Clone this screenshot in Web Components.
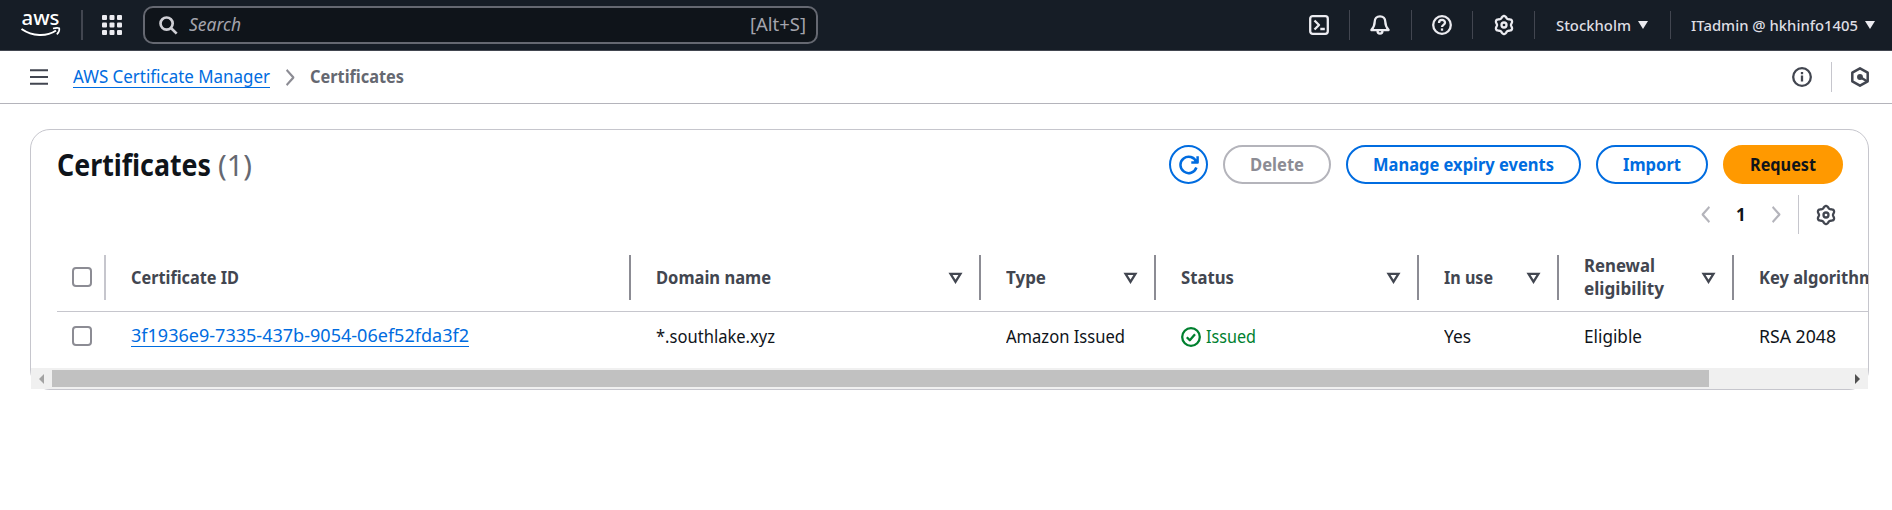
<!DOCTYPE html>
<html lang="en">
<head>
<meta charset="utf-8">
<title>Certificates | AWS Certificate Manager</title>
<style>
html,body{margin:0;padding:0;background:#fff}
body{font:17.5px/23px "Noto Sans","Open Sans",sans-serif;color:#0f141a;width:1892px;height:510px;overflow:hidden}
</style>
</head>
<body>
<acm-app></acm-app>
<script>
const define = (name, html, init) => customElements.define(name, class extends HTMLElement {
  connectedCallback() {
    if (this.shadowRoot) return;
    const t = document.createElement('template');
    t.innerHTML = typeof html === 'function' ? html(this) : html;
    this.attachShadow({mode: 'open'}).append(t.content.cloneNode(true));
    if (init) init(this);
  }
});

/* Text that fills a given width */
define('fit-text', '<style>:host{display:inline-block;white-space:nowrap;flex:none}span{display:inline-block;transform-origin:0 50%}</style><span><slot></slot></span>', el => {
  const s = el.shadowRoot.querySelector('span'), w = +el.getAttribute('w');
  s.style.transform = `scaleX(${w / s.getBoundingClientRect().width})`;
  el.style.width = w + 'px';
});

/* Six-lobed cog outline */
let cog = '';
for (let i = 0; i < 72; i++) {
  const a = i * Math.PI / 36, r = 8 - 1.05 * Math.cos(6 * a);
  cog += (i ? 'L' : 'M') + (10 + r * Math.cos(a)).toFixed(2) + ' ' + (10 + r * Math.sin(a)).toFixed(2);
}
cog += 'Z';
const icons = {
  terminal: '<rect x="1.2" y="1.2" width="17.6" height="17.6" rx="2.5"/><path d="M5.5 5.5 10 10l-4.500 4.500M11.300 14h4.500"/>',
  bell: '<path d="M10 1.300c-3.200 0-5.300 2.300-5.300 5.500 0 4.200-1.400 6-3.300 8.300h17.200c-1.900-2.300-3.300-4.100-3.300-8.300 0-3.200-2.100-5.500-5.300-5.500ZM7.500 15.500c0 4.200 5 4.200 5 0"/>',
  help: '<circle cx="10" cy="10" r="8.800"/><path d="M7 8c0-4 6-4 6-.3 0 2.200-3 2.100-3 4.300"/><path d="M10 13.400v2.300"/>',
  cog: `<path d="${cog}"/><circle cx="10" cy="10" r="2.500"/>`,
  info: '<circle cx="10" cy="10" r="8.800"/><path d="M10 8.500v6M10 5v2.200"/>',
  hex: '<path d="M10 1.300 17.700 5.700v8.600L10 18.700l-7.700-4.400V5.700Z"/><circle cx="10" cy="10" r="1.700" fill="currentColor"/><path d="M10 10l7 4.200"/>',
  check: '<circle cx="10" cy="10" r="8.800"/><path d="m5.800 10.200 3 3 5.200-6"/>',
  refresh: '<path d="M17.400 12.500A8.200 8.200 0 1 1 17.300 7M18.600 1.200v6.300h-6.300"/>',
  search: '<circle cx="8" cy="8" r="6.400"/><path d="m12.600 12.600 6 6"/>',
  menu: '<path d="M0 2.500h20M0 10h20M0 17.500h20"/>',
  right: '<path d="m4 1 10.500 9L4 19"/>',
  prev: '<path d="M16 1 5.500 10 16 19"/>',
  filter: '<path d="M2.300 3h15.400L10 16.500Z" stroke-linejoin="miter"/>',
  caret: '<path d="M0 0h20L10 20Z" fill="currentColor" stroke="none"/>',
  grid: [1,2,3].map(i=>[1,2,3].map(j=>`<rect x="${(i-1)*7.5}" y="${(j-1)*7.5}" width="5" height="5" rx="1" fill="currentColor" stroke="none"/>`).join('')).join('')
};
define('ui-icon', el => {
  const s = el.getAttribute('s') || 20, h = el.getAttribute('h') || s;
  return `<style>:host{display:block;flex:none;width:${s}px;height:${h}px}svg{display:block;overflow:visible}</style>
  <svg width="${s}" height="${h}" viewBox="0 0 20 20" preserveAspectRatio="none" fill="none" stroke="currentColor" stroke-width="${el.getAttribute('sw') || 2.3}" stroke-linejoin="round">${icons[el.getAttribute('name')]}</svg>`;
});

define('aws-logo', `<style>:host{display:block;width:40px;height:26px;flex:none}svg{display:block;overflow:visible}text{font:500 20px "Noto Sans",sans-serif;fill:#fff}</style>
<svg width="40" height="26" viewBox="0 0 40 26"><text x="0.500" y="12.500" textLength="38" lengthAdjust="spacingAndGlyphs">aws</text>
<path d="M.5 17c11 7.500 25 8 34.500 1.500" fill="none" stroke="#fff" stroke-width="2.100"/><path d="M32 16.600c2.500-.7 5-.9 6.300-.3.300 1.800-.6 4.300-2.500 6" fill="none" stroke="#fff" stroke-width="1.600"/></svg>`);

define('ui-rule', el => `<style>:host{display:block;flex:none;width:${el.getAttribute('w') || 1}px;height:${el.getAttribute('h') || 30}px;background:${el.getAttribute('c') || '#424650'}}</style>`);

define('top-nav', `<style>
:host{display:flex;box-sizing:border-box;height:51px;align-items:center;background:#161d26;border-bottom:1px solid #424650;color:#ebebf0;padding-left:21px}
.search{box-sizing:border-box;display:flex;align-items:center;width:675px;height:38px;margin-left:21px;padding:0 10px 0 14px;border:2px solid #656871;border-radius:10px;background:#0f141a;color:#a4a4ad}
.search ui-icon{color:#d0d0d6;margin-right:11px}
.search i{flex:1;margin-top:-1px}.key{margin-top:-1px}
.right{display:flex;align-items:center;margin-left:auto;padding-right:17px}
.n{font-size:15px;font-weight:500;line-height:20px;color:#dedee3}
</style>
<aws-logo></aws-logo><ui-rule w="2" style="margin:0 19px 0 20px"></ui-rule><ui-icon name="grid"></ui-icon>
<div class="search"><ui-icon name="search" s="19" sw="2.8"></ui-icon><i><fit-text w="52">Search</fit-text></i><fit-text class="key" w="56">[Alt+S]</fit-text></div>
<div class="right">
<ui-icon name="terminal"></ui-icon><ui-rule style="margin:0 20px"></ui-rule>
<ui-icon name="bell"></ui-icon><ui-rule style="margin:0 20px 0 21px"></ui-rule>
<ui-icon name="help"></ui-icon><ui-rule h="28" style="margin:0 21px 0 20px"></ui-rule>
<ui-icon name="cog"></ui-icon><ui-rule h="28" style="margin:0 21px 0 20px"></ui-rule>
<fit-text class="n" w="75">Stockholm</fit-text><ui-icon name="caret" s="10" h="8" style="margin-left:7px"></ui-icon>
<ui-rule h="28" style="margin:0 20px 0 22px"></ui-rule>
<fit-text class="n" w="167">ITadmin @ hkhinfo1405</fit-text><ui-icon name="caret" s="10" h="8" style="margin-left:7px"></ui-icon>
</div>`);

define('crumb-bar', `<style>
:host{display:flex;box-sizing:border-box;height:53px;align-items:center;border-bottom:1px solid #b4b4bb;padding:0 22px 0 30px;color:#424650}
a{color:#006ce0;border-bottom:1px solid #006ce0;height:22px;line-height:22px;margin:-1px 14px 0 25px}
b{color:#656871;margin:-1px auto 0 13px}
</style>
<ui-icon name="menu" s="18" sw="2.400"></ui-icon><a><fit-text w="197">AWS Certificate Manager</fit-text></a>
<ui-icon name="right" s="13" h="17" sw="3" style="color:#8c8c94"></ui-icon><b><fit-text w="94">Certificates</fit-text></b>
<ui-icon name="info"></ui-icon><ui-rule c="#c6c6cd" style="margin:0 18px 0 19px"></ui-rule><ui-icon name="hex" sw="2.500"></ui-icon>`);

define('ui-button', el => `<style>
:host{display:flex;box-sizing:border-box;align-items:center;justify-content:center;flex:none;width:${el.getAttribute('w')}px;height:39px;border:2px solid #006ce0;border-radius:20px;color:#006ce0;font-size:17px;font-weight:700;padding-bottom:1px}
:host([kind=off]){border-color:#b4b4bb;color:#8c8c94}
:host([kind=primary]){background:#ff9900;border-color:#ff9900;color:#0f141a}
:host([kind=round]){padding:0}
</style><slot></slot>`);

define('check-box', `<style>:host{display:block;flex:none;box-sizing:border-box;width:20px;height:20px;border:2px solid #8c8c94;border-radius:4px;background:#fff}</style>`);

define('th-cell', el => `<style>
:host{display:flex;box-sizing:border-box;align-items:center;flex:none;width:${el.getAttribute('w')}px;height:67px;padding-left:25px;color:#424650;font-size:17px;font-weight:700}
div{flex:1;padding-bottom:1px}.f{margin-right:17px}
</style><div><slot></slot></div>${el.hasAttribute('filter') ? '<ui-icon class="f" name="filter" s="13" h="12" sw="3.600"></ui-icon>' : ''}${el.hasAttribute('last') ? '' : '<ui-rule w="2" h="45" c="#8c8c94"></ui-rule>'}`);
define('td-cell', el => `<style>
:host{display:flex;box-sizing:border-box;align-items:center;flex:none;width:${el.getAttribute('w')}px;height:48px;padding-left:25px}
</style><slot></slot>`);

define('h-scrollbar', `<style>
:host{display:flex;align-items:center;box-sizing:border-box;height:21px;background:#f0f0f0;padding:0 8px}
.t{width:1657px;height:17px;background:#c1c1c1;margin-left:8px}
.l,.r{width:0;height:0;border:5px solid transparent}
.l{border-left:0;border-right-color:#a3a3a3}.r{border-right:0;border-left-color:#505050;margin-left:auto}
</style><div class="l"></div><div class="t"></div><div class="r"></div>`);

define('cert-panel', `<style>
:host{display:block;position:relative;box-sizing:border-box;width:1839px;height:261px;margin:25px 0 0 30px;border:1px solid #c6c6cd;border-radius:20px}
.head{display:flex;align-items:center;height:39px;padding:15px 25px 0 26px;gap:15px}
h1{margin:0 auto 0 0;font-size:29.500px;line-height:38px;font-weight:700;display:flex;gap:7px}
h1 .c{font-weight:400;color:#656871}
.pages{display:flex;align-items:center;justify-content:flex-end;height:39px;margin-top:11px;padding-right:32px;color:#b4b4bb}
.pages b{color:#0f141a;font-size:17px;font-weight:700;margin:0 23px 0 24px;width:11px}
.table{overflow:hidden;margin-top:10px;padding-left:26px;height:124px}
.row{display:flex;width:1900px}.hd{border-bottom:1px solid #c6c6cd}
.hd check-box{margin-top:-2px}
.sel{display:flex;align-items:center;width:49px;flex:none;box-sizing:border-box;padding-left:15px;justify-content:space-between}
.link{color:#006ce0;border-bottom:1px solid #006ce0;height:21px;line-height:21px;margin-top:0}
.ok{color:#00802f;margin-left:5px}
</style>
<div class="head"><h1><fit-text w="154">Certificates</fit-text><fit-text class="c" w="34">(1)</fit-text></h1>
<ui-button kind="round" w="39"><ui-icon name="refresh" sw="2.500"></ui-icon></ui-button>
<ui-button kind="off" w="108"><fit-text w="54">Delete</fit-text></ui-button>
<ui-button w="235"><fit-text w="181">Manage expiry events</fit-text></ui-button>
<ui-button w="112"><fit-text w="58">Import</fit-text></ui-button>
<ui-button kind="primary" w="120"><fit-text w="66">Request</fit-text></ui-button></div>
<div class="pages"><ui-icon name="prev" s="13" h="17" sw="3"></ui-icon><b>1</b><ui-icon name="right" s="13" h="17" sw="3"></ui-icon>
<ui-rule h="39" c="#c6c6cd" style="margin:0 17px 0 15px"></ui-rule><ui-icon name="cog" style="color:#424650"></ui-icon></div>
<div class="table">
<div class="row hd"><div class="sel"><check-box></check-box><ui-rule w="2" h="45" c="#c6c6cd"></ui-rule></div>
<th-cell w="525"><fit-text w="108">Certificate ID</fit-text></th-cell>
<th-cell w="350" filter><fit-text w="115">Domain name</fit-text></th-cell>
<th-cell w="175" filter><fit-text w="40">Type</fit-text></th-cell>
<th-cell w="263" filter><fit-text w="53">Status</fit-text></th-cell>
<th-cell w="140" filter><fit-text w="49">In use</fit-text></th-cell>
<th-cell w="175" filter><fit-text w="71">Renewal</fit-text><br><fit-text w="80">eligibility</fit-text></th-cell>
<th-cell w="175" last><fit-text w="116">Key algorithm</fit-text></th-cell></div>
<div class="row"><div class="sel"><check-box></check-box></div>
<td-cell w="525"><span class="link"><fit-text w="338">3f1936e9-7335-437b-9054-06ef52fda3f2</fit-text></span></td-cell>
<td-cell w="350"><fit-text w="119">*.southlake.xyz</fit-text></td-cell>
<td-cell w="175"><fit-text w="119">Amazon Issued</fit-text></td-cell>
<td-cell w="263"><ui-icon name="check" style="color:#00802f;margin-top:2px"></ui-icon><fit-text class="ok" w="50">Issued</fit-text></td-cell>
<td-cell w="140"><fit-text w="27">Yes</fit-text></td-cell>
<td-cell w="175"><fit-text w="58">Eligible</fit-text></td-cell>
<td-cell w="175"><fit-text w="77">RSA 2048</fit-text></td-cell></div>
</div>
<h-scrollbar></h-scrollbar>`);

define('acm-app', '<style>:host{display:block}</style><top-nav></top-nav><crumb-bar></crumb-bar><cert-panel></cert-panel>');
</script>
</body>
</html>
